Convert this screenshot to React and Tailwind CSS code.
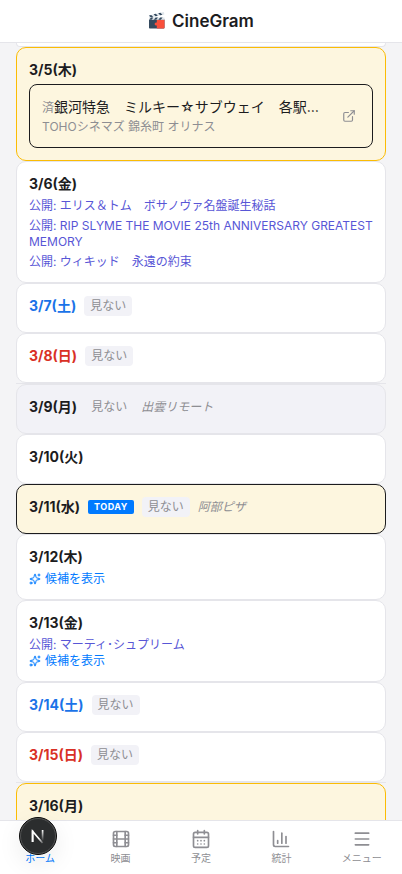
import {
  CalendarDays,
  ChartColumn,
  ExternalLink,
  Film,
  House,
  Menu,
  Sparkles,
} from 'lucide-react'

const COLOR_FECHA = {
  normal: 'text-[#1c1c1e]',
  sabado: 'text-[#1a73e8]',
  domingo: 'text-[#d93025]',
}

const ESTILO_TARJETA = {
  normal: 'border-[#e5e5ea] bg-white',
  descanso: 'border-[#e5e5ea] bg-[#f2f2f7]',
  destacado: 'border-[#fbbc04] bg-[#fdf6df]',
  hoy: 'border-[#1c1c1e] bg-[#fdf6df]',
}

const DIAS = [
  {
    fecha: '3/5(木)',
    estilo: 'destacado',
    funcion: {
      titulo: '銀河特急\u3000ミルキー☆サブウェイ\u3000各駅…',
      sala: 'TOHOシネマズ 錦糸町 オリナス',
    },
  },
  {
    fecha: '3/6(金)',
    estrenos: [
      'エリス＆トム\u3000ボサノヴァ名盤誕生秘話',
      'RIP SLYME THE MOVIE 25th ANNIVERSARY GREATEST MEMORY',
      'ウィキッド\u3000永遠の約束',
    ],
  },
  { fecha: '3/7(土)', color: 'sabado', noVer: true },
  { fecha: '3/8(日)', color: 'domingo', noVer: true },
  {
    fecha: '3/9(月)',
    estilo: 'descanso',
    noVer: true,
    nota: '出雲リモート',
    inicioSemana: true,
  },
  { fecha: '3/10(火)' },
  { fecha: '3/11(水)', estilo: 'hoy', hoy: true, noVer: true, nota: '阿部ピザ' },
  { fecha: '3/12(木)', candidatos: true },
  { fecha: '3/13(金)', estrenos: ['マーティ･シュプリーム'], candidatos: true },
  { fecha: '3/14(土)', color: 'sabado', noVer: true },
  { fecha: '3/15(日)', color: 'domingo', noVer: true },
  { fecha: '3/16(月)', estilo: 'destacado', inicioSemana: true },
]

const PESTANAS = [
  { nombre: 'ホーム', Icono: House, activa: true },
  { nombre: '映画', Icono: Film },
  { nombre: '予定', Icono: CalendarDays },
  { nombre: '統計', Icono: ChartColumn },
  { nombre: 'メニュー', Icono: Menu },
]

function Claqueta() {
  return (
    <svg viewBox="0 0 18 18" className="mb-0.5 h-[18px] w-[18px]" aria-hidden="true">
      <rect x="1" y="8" width="15.5" height="9.5" rx="0.8" fill="#34495e" />
      <path
        d="M8.8 8.8h7.7v7.9a.8.8 0 0 1-.8.8H8.8v-3a1.6 1.6 0 1 1 0-3z"
        fill="#f94f3b"
      />
      <path d="M.8 4.4 15.8 1l.6 2.4L1.4 6.8z" fill="#dfe5ea" />
      <path
        d="m1 4.4 2.2-.5 2 2-2.3.5zM5.6 3.3l2.2-.5 2 2-2.2.5zM10.2 2.3l2.2-.5 2 2-2.2.5z"
        fill="#34495e"
      />
      <rect x="1" y="6.5" width="15.5" height="2.3" fill="#dfe5ea" />
      <path
        d="M3 6.5h2.4L3.6 8.8H1.2zM7.6 6.5H10L8.2 8.8H5.8zM12.2 6.5h2.4l-1.8 2.3h-2.4z"
        fill="#34495e"
      />
    </svg>
  )
}

function LogoNext() {
  return (
    <svg viewBox="0 0 38 38" className="h-full w-full" fill="none" aria-hidden="true">
      <defs>
        <linearGradient id="diagonal" x1="18" y1="19" x2="25" y2="27" gradientUnits="userSpaceOnUse">
          <stop offset="0.3" stopColor="#fff" />
          <stop offset="1" stopColor="#fff" stopOpacity="0" />
        </linearGradient>
        <linearGradient id="vertical" x1="24" y1="13" x2="24" y2="24" gradientUnits="userSpaceOnUse">
          <stop stopColor="#fff" />
          <stop offset="1" stopColor="#fff" stopOpacity="0" />
        </linearGradient>
      </defs>
      <circle cx="19" cy="19" r="18.5" fill="#2b2d2e" stroke="#0a0a0a" />
      <circle cx="19" cy="19" r="17.5" stroke="#505152" />
      <path d="M13.6 25V14.2L23.6 26" stroke="url(#diagonal)" strokeWidth="1.7" />
      <path d="M13.6 25V13.5" stroke="#fff" strokeWidth="1.7" />
      <path d="M23.6 13v12" stroke="url(#vertical)" strokeWidth="1.7" />
    </svg>
  )
}

function Funcion({ titulo, sala }) {
  return (
    <div className="flex items-center gap-3 rounded-lg border border-[#1c1c1e] p-3">
      <div className="min-w-0 flex-1">
        <p className="truncate text-sm leading-5 text-[#1c1c1e]">
          <span className="text-xs text-[#8e8e93]">済</span>
          {titulo}
        </p>
        <p className="mt-0.5 truncate text-xs text-[#8e8e93]">{sala}</p>
      </div>
      <a href="#funcion" aria-label="詳細" className="p-1 text-[#8e8e93]">
        <ExternalLink className="h-3.5 w-3.5" />
      </a>
    </div>
  )
}

function Dia({ dia }) {
  return (
    <li className={dia.inicioSemana ? 'border-t border-[#e5e5ea]' : ''}>
      <article
        className={`rounded-[10px] border p-3 ${
          ESTILO_TARJETA[dia.estilo || 'normal']
        }`}
      >
        <div className="flex h-6 items-start gap-2">
          <h2
            className={`text-sm font-bold ${
              COLOR_FECHA[dia.color || 'normal']
            }`}
          >
            {dia.fecha}
          </h2>

          {dia.hoy && (
            <span className="mt-[3px] rounded-xs bg-[#007aff] px-1.5 text-[9px] leading-[14px] font-bold tracking-wider text-white">
              TODAY
            </span>
          )}

          {dia.noVer && (
            <button
              type="button"
              className="rounded bg-[#f2f2f7] px-1.5 text-xs leading-5 text-[#8e8e93]"
            >
              見ない
            </button>
          )}

          {dia.nota && (
            <span className="text-xs leading-5 text-[#8e8e93] italic">
              {dia.nota}
            </span>
          )}
        </div>

        {dia.funcion && <Funcion {...dia.funcion} />}

        {dia.estrenos && (
          <ul className="space-y-1 text-xs text-[#5856d6]">
            {dia.estrenos.map((estreno) => (
              <li key={estreno}>公開: {estreno}</li>
            ))}
          </ul>
        )}

        {dia.candidatos && (
          <button
            type="button"
            className="flex items-center gap-1 text-xs text-[#007aff]"
          >
            <Sparkles className="h-3 w-3" />
            候補を表示
          </button>
        )}
      </article>
    </li>
  )
}

function App() {
  return (
    <div
      lang="ja"
      className="relative flex h-screen flex-col overflow-hidden bg-[#f4f4f6] font-['Inter','Noto_Sans_CJK_JP',sans-serif]"
    >
      <header className="flex shrink-0 items-center justify-center gap-1.5 border-b border-[#e5e5ea] bg-white py-2">
        <Claqueta />
        <h1 className="text-[17px] leading-[26px] font-semibold text-[#1c1c1e]">
          CineGram
        </h1>
      </header>

      <main className="min-h-0 flex-1 overflow-hidden px-4">
        {/* Borde inferior del día anterior */}
        <div className="h-1 rounded-b-[10px] border-x border-b border-[#e5e5ea] bg-white" />
        <ul>
          {DIAS.map((dia) => (
            <Dia key={dia.fecha} dia={dia} />
          ))}
        </ul>
      </main>

      <nav className="grid shrink-0 grid-cols-5 border-t border-[#e5e5ea] bg-white py-2">
        {PESTANAS.map(({ nombre, Icono, activa }) => (
          <a
            key={nombre}
            href={`#${nombre}`}
            className={`flex flex-col items-center gap-px text-[10px] leading-4 ${
              activa ? 'text-[#007aff]' : 'text-[#8e8e93]'
            }`}
          >
            <Icono className="h-5 w-5" />
            {nombre}
          </a>
        ))}
      </nav>

      {/* Botón flotante de desarrollo */}
      <button
        type="button"
        aria-label="Next.js"
        className="absolute bottom-[19px] left-[19px] h-[38px] w-[38px] rounded-full shadow-[0_8px_24px_rgba(0,0,0,0.08)]"
      >
        <LogoNext />
      </button>
    </div>
  )
}

export default App
